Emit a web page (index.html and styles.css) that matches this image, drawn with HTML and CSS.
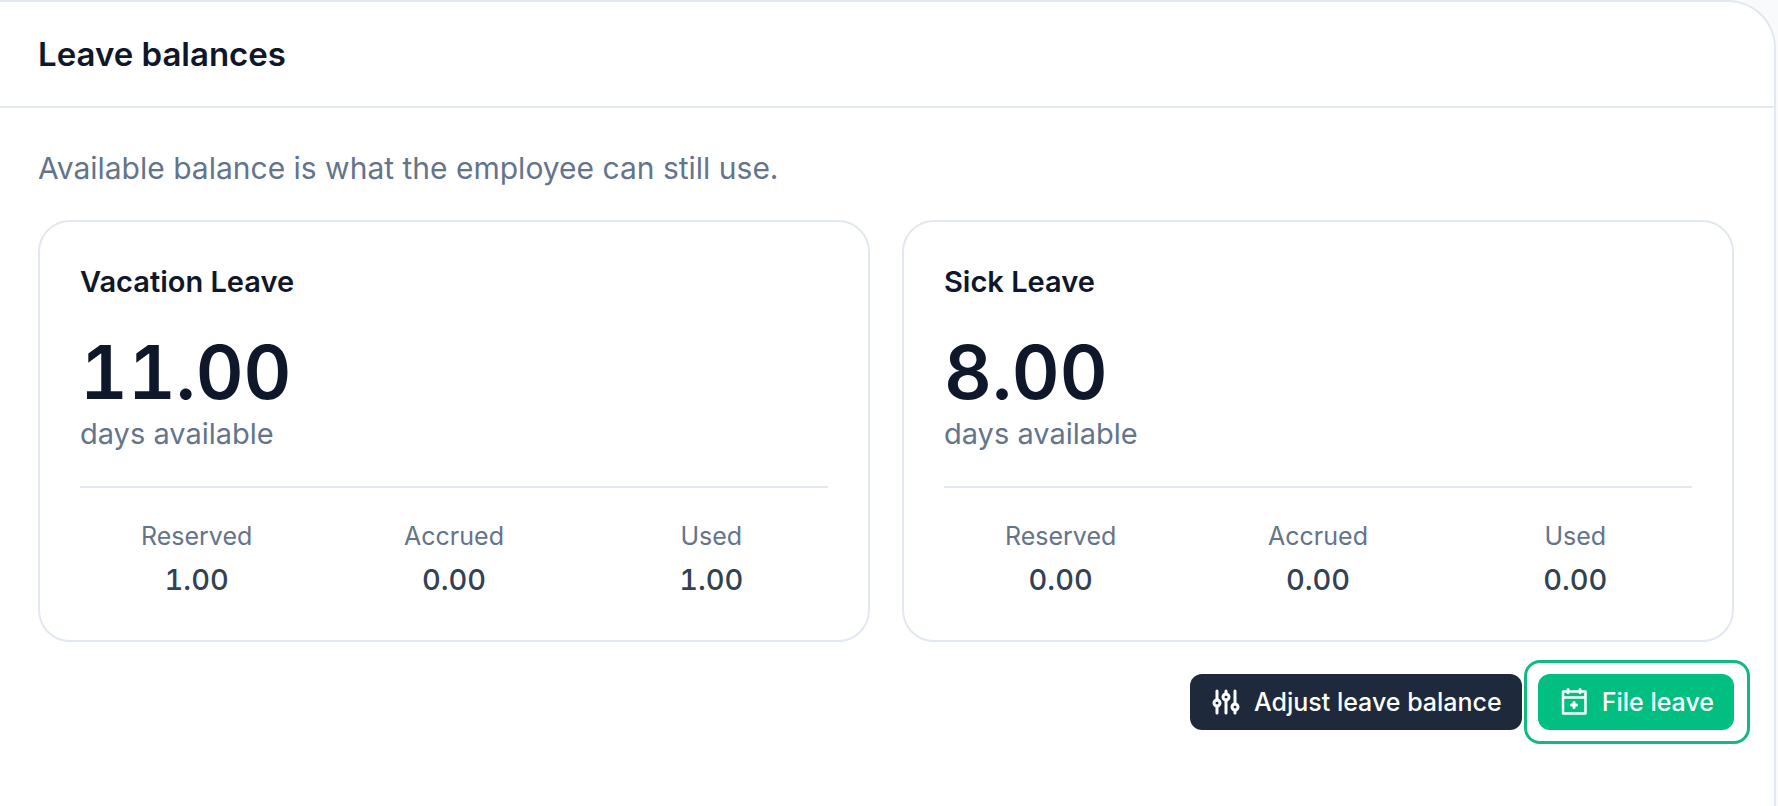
FILE: index.html
```html
<!DOCTYPE html>
<html lang="en">
<head>
    <meta charset="UTF-8">
    <meta name="viewport" content="width=device-width, initial-scale=1.0">
    <title>Leave balances</title>
    <link rel="stylesheet" href="styles.css">
</head>
<body>
    <section class="panel">
        <header class="panel-header">
            <h1>Leave balances</h1>
        </header>
        <div class="panel-body">
            <p class="hint">Available balance is what the employee can still use.</p>
            <div class="cards">
                <article class="card">
                    <h2>Vacation Leave</h2>
                    <p class="amount">11.00</p>
                    <p class="unit">days available</p>
                    <dl class="stats">
                        <div><dt>Reserved</dt><dd>1.00</dd></div>
                        <div><dt>Accrued</dt><dd>0.00</dd></div>
                        <div><dt>Used</dt><dd>1.00</dd></div>
                    </dl>
                </article>
                <article class="card">
                    <h2>Sick Leave</h2>
                    <p class="amount">8.00</p>
                    <p class="unit">days available</p>
                    <dl class="stats">
                        <div><dt>Reserved</dt><dd>0.00</dd></div>
                        <div><dt>Accrued</dt><dd>0.00</dd></div>
                        <div><dt>Used</dt><dd>0.00</dd></div>
                    </dl>
                </article>
            </div>
            <div class="actions">
                <button type="button" class="btn btn-dark">
                    <svg class="icon" viewBox="0 0 32 32" fill="none" stroke="currentColor" stroke-width="3" stroke-linecap="round" aria-hidden="true">
                        <path d="M7 5v9M7 20v7M16 5v3M16 14v13M25 5v13M25 24v3"/>
                        <circle cx="7" cy="17" r="3"/>
                        <circle cx="16" cy="11" r="3"/>
                        <circle cx="25" cy="21" r="3"/>
                    </svg>
                    Adjust leave balance
                </button>
                <button type="button" class="btn btn-green">
                    <svg class="icon" viewBox="0 0 32 32" fill="none" stroke="currentColor" stroke-width="2.5" stroke-linecap="round" stroke-linejoin="round" aria-hidden="true">
                        <path d="M5 5.5h22.5v22H5zM5 11.5h22.5"/>
                        <path stroke-width="3" d="M10 3.5v3M22 3.5v3M16 16.5v5M13.5 19h5"/>
                    </svg>
                    File leave
                </button>
            </div>
        </div>
    </section>
</body>
</html>
```
FILE: styles.css
```css
* { box-sizing: border-box; }
body { margin: 0; background: #f8fafc; color: #0f172a; font-family: Inter, "Open Sans", sans-serif; }
h1, h2, p, dl, dd { margin: 0; }

.panel { min-height: 100vh; margin-right: 2px; background: #fff; border: 2px solid #e2e8f0; border-left: 0; border-bottom: 0; border-top-right-radius: 48px; }
.panel-header { padding: 32px 38px; border-bottom: 2px solid #e2e8f0; }
h1 { font-size: 33px; line-height: 40px; font-weight: 600; }
.panel-body { padding: 40px 40px 40px 38px; }
.hint, .unit { font-size: 29px; line-height: 40px; color: #64748b; }
.hint { font-size: 30px; }

.cards { display: grid; grid-template-columns: 1fr 1fr; gap: 32px; margin-top: 32px; }
.card { padding: 40px; border: 2px solid #e2e8f0; border-radius: 32px; }
h2 { font-size: 29px; line-height: 40px; font-weight: 600; }
.amount { margin-top: 28px; font-size: 74px; line-height: 84px; font-weight: 600; font-variant-numeric: tabular-nums; }
.stats { display: grid; grid-template-columns: repeat(3, 1fr); gap: 24px; margin-top: 32px; padding-top: 32px; border-top: 2px solid #e2e8f0; text-align: center; }
.stats dt { font-size: 25px; line-height: 32px; color: #64748b; }
.stats dd { margin-top: 8px; font-size: 29px; line-height: 40px; font-weight: 500; font-variant-numeric: tabular-nums; color: #334155; }

.actions { display: flex; justify-content: flex-end; gap: 16px; margin-top: 32px; }
.btn { position: relative; display: flex; align-items: center; gap: 12px; height: 56px; padding: 0 20px; border: 0; border-radius: 12px; color: #fff; font: 500 25px/32px Inter, "Open Sans", sans-serif; cursor: pointer; }
.btn-dark { background: #1e293b; }
.btn-green { background: #00bf80; }
/* highlight ring around the primary action */
.btn-green::after { content: ""; position: absolute; inset: -14px -16px -14px -14px; border: 3px solid #12b981; border-radius: 16px; }
.icon { width: 32px; height: 32px; }
```
